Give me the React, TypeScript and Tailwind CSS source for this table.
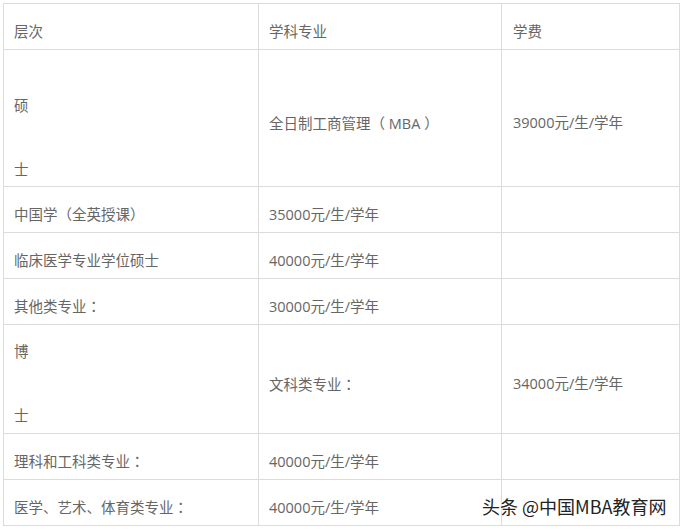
import React from "react";

type Row = {
  h: string;
  level: React.ReactNode;
  major: React.ReactNode;
  fee: string;
};

const cell = "flex items-center pt-[9px] pl-[10px] border-b border-[#dcdcdc]";

// centred full-width punctuation, as in the source page
const P = ({ c }: { c: string }) => (
  <span className="font-['Noto_Sans_CJK_TC',sans-serif]">{c}</span>
);

function Split({ top, bottom, lead = false }: { top: string; bottom: string; lead?: boolean }) {
  return (
    <div className="flex flex-col">
      {lead && <div className="h-[29px]" />}
      <div className="h-[21px] leading-[21px]">{top}</div>
      <div className="h-[43px]" />
      <div className="h-[21px] leading-[21px]">{bottom}</div>
    </div>
  );
}

const rows: Row[] = [
  { h: "h-[46px]", level: "层次", major: "学科专业", fee: "学费" },
  {
    h: "h-[137px]",
    level: <Split top="硕" bottom="士" lead />,
    major: <span>全日制工商管理<P c="（" /> MBA <P c="）" /></span>,
    fee: "39000元/生/学年",
  },
  { h: "h-[46px]", level: <span>中国学<P c="（" />全英授课<P c="）" /></span>, major: "35000元/生/学年", fee: "" },
  { h: "h-[46px]", level: "临床医学专业学位硕士", major: "40000元/生/学年", fee: "" },
  { h: "h-[46px]", level: <span>其他类专业<P c="：" /></span>, major: "30000元/生/学年", fee: "" },
  { h: "h-[109px]", level: <Split top="博" bottom="士" />, major: <span>文科类专业<P c="：" /></span>, fee: "34000元/生/学年" },
  { h: "h-[46px]", level: <span>理科和工科类专业<P c="：" /></span>, major: "40000元/生/学年", fee: "" },
  { h: "h-[46px]", level: <span>医学、艺术、体育类专业<P c="：" /></span>, major: "40000元/生/学年", fee: "" },
];

export default function App() {
  return (
    <div className="relative w-[684px] h-[530px] bg-white pt-[3px] pl-[3px] text-[14.5px] leading-[21px] text-[#666] font-['Open_Sans','Noto_Sans_CJK_SC',sans-serif]">
      <div className="grid grid-cols-[255px_243px_178px] w-[677px] border-t border-l border-[#dcdcdc]">
        {rows.map((r, i) => (
          <React.Fragment key={i}>
            <div className={`${cell} ${r.h} border-r`}>{r.level}</div>
            <div className={`${cell} ${r.h} border-r`}>{r.major}</div>
            <div className={`${cell} ${r.h} border-r pl-[11px]`}>{r.fee}</div>
          </React.Fragment>
        ))}
      </div>
      <div className="absolute left-[482px] top-[494px] text-[18px] leading-[24px] text-[#222] font-['Noto_Sans_CJK_SC',sans-serif] [text-shadow:0_0_2px_#fff,0_0_2px_#fff,0_0_3px_#fff]">
        头条 @中国MBA教育网
      </div>
    </div>
  );
}
